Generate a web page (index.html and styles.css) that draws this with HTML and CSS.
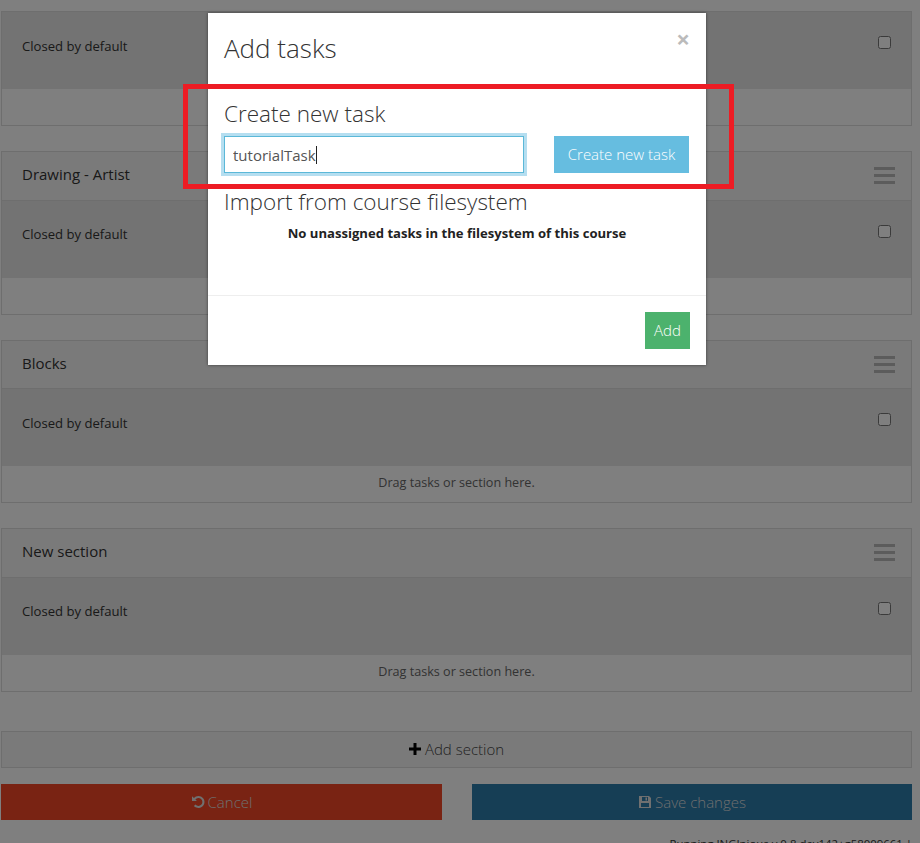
FILE: index.html
```html
<!DOCTYPE html>
<html lang="en">
<head>
    <meta charset="UTF-8">
    <title>Edit course structure</title>
    <link rel="stylesheet" href="styles.css">
</head>
<body>
    <div class="page">
        <div class="section first">
            <div class="section-body">
                <span>Closed by default</span>
                <input type="checkbox">
            </div>
            <div class="section-drop"></div>
        </div>

        <div class="section">
            <div class="section-head">
                <span>Drawing - Artist</span>
                <div class="bars"><i></i><i></i><i></i></div>
            </div>
            <div class="section-body">
                <span>Closed by default</span>
                <input type="checkbox">
            </div>
            <div class="section-drop"></div>
        </div>

        <div class="section">
            <div class="section-head">
                <span>Blocks</span>
                <div class="bars"><i></i><i></i><i></i></div>
            </div>
            <div class="section-body">
                <span>Closed by default</span>
                <input type="checkbox">
            </div>
            <div class="section-drop">Drag tasks or section here.</div>
        </div>

        <div class="section">
            <div class="section-head">
                <span>New section</span>
                <div class="bars"><i></i><i></i><i></i></div>
            </div>
            <div class="section-body">
                <span>Closed by default</span>
                <input type="checkbox">
            </div>
            <div class="section-drop">Drag tasks or section here.</div>
        </div>

        <div class="add-section">
            <svg class="icon-plus" viewBox="0 0 12 12"><path d="M4.500 0h3v4.500H12v3H7.500V12h-3V7.500H0v-3h4.500z"/></svg>
            Add section
        </div>

        <div class="actions">
            <div class="btn-big cancel">
                <svg class="icon" viewBox="0 0 14 14"><path d="M7.500 1a6 6 0 1 1-4.600 9.900l1.600-1.400A3.900 3.900 0 1 0 4.400 4.600L5.900 6H1V1.200l1.900 1.800A6 6 0 0 1 7.500 1z"/></svg>
                Cancel
            </div>
            <div class="btn-big save">
                <svg class="icon" viewBox="0 0 14 14"><path fill-rule="evenodd" d="M1 1h10l2 2v10H1zM4 2v4h6V2zM3 8v4h8V8zM7.500 2.500h1.500v3H7.500z"/></svg>
                Save changes
            </div>
        </div>

        <div class="version">Running INGInious v.0.8.dev142+g58009661 |</div>
    </div>

    <div class="overlay"></div>

    <div class="modal">
        <div class="modal-head">
            <h4>Add tasks</h4>
            <span class="close">&times;</span>
        </div>
        <div class="modal-body">
            <h3>Create new task</h3>
            <div class="new-task">
                <div class="task-field">
                    <input type="text" class="task-input" value="tutorialTask">
                    <span class="caret"></span>
                </div>
                <button class="btn-create">Create new task</button>
            </div>
            <h3>Import from course filesystem</h3>
            <p class="empty">No unassigned tasks in the filesystem of this course</p>
        </div>
        <div class="modal-foot">
            <button class="btn-add">Add</button>
        </div>
    </div>

    <div class="highlight"></div>
</body>
</html>
```

FILE: styles.css
```css
html, body {
    margin: 0;
    height: 843px;
    overflow: hidden;
}
body {
    font-family: "Open Sans", sans-serif;
    font-size: 13.100px;
    color: #333;
    background: #fff;
}
.page {
    padding: 11px 8px 0 1px;
}
.section {
    border: 1px solid #ddd;
    margin-bottom: 25px;
}
.section-head {
    height: 48.500px;
    padding: 0 16px 3px 20px;
    box-sizing: border-box;
    background: #f5f5f5;
    border-bottom: 1px solid #ddd;
    display: flex;
    align-items: center;
    justify-content: space-between;
    font-size: 15px;
}
.bars {
    display: flex;
    flex-direction: column;
    gap: 4px;
    width: 21px;
    margin-top: 3px;
}
.bars i {
    display: block;
    height: 3px;
    background: #b8b8b8;
}
.section-body {
    height: 77px;
    padding: 24.500px 20px 0;
    background: #e6e6e6;
    display: flex;
    align-items: flex-start;
    justify-content: space-between;
    box-sizing: border-box;
    line-height: 18px;
}
.section-body input {
    margin: -.5px 0 0;
    width: 13px;
    height: 13px;
}
.section-drop {
    height: 36px;
    line-height: 34px;
    text-align: center;
    font-size: 12.600px;
    color: #666;
}
.add-section {
    margin-top: 39px;
    height: 35px;
    border: 1px solid #ddd;
    background: #f5f5f5;
    display: flex;
    align-items: center;
    justify-content: center;
    gap: 4px;
    font-size: 15px;
    font-weight: 300;
    color: #444;
}
.icon-plus {
    width: 12px;
    height: 12px;
    fill: #000;
}
.actions {
    margin-top: 16px;
    display: grid;
    grid-template-columns: 441px 440px;
    justify-content: space-between;
}
.btn-big {
    height: 36px;
    display: flex;
    align-items: center;
    justify-content: center;
    gap: 3px;
    font-size: 15px;
    font-weight: 300;
    color: #ddd;
}
.btn-big .icon {
    width: 14px;
    height: 14px;
    fill: #e0e0e0;
}
.cancel {
    background: #f24726;
}
.save {
    background: #2c7cab;
}
.version {
    margin-top: 16px;
    text-align: right;
    font-size: 11.400px;
}
.overlay {
    position: absolute;
    inset: 0;
    background: rgba(0, 0, 0, .5);
}
.modal {
    position: absolute;
    left: 208px;
    top: 13px;
    width: 498px;
    height: 352px;
    background: #fff;
    display: flex;
    flex-direction: column;
    box-shadow: 0 0 3px rgba(0, 0, 0, .5);
}
.modal-head {
    height: 85px;
    flex: none;
    padding: 0 16px;
    display: flex;
    justify-content: space-between;
}
.modal-head h4 {
    margin: 17px 0 0;
    font-size: 26px;
    font-weight: 300;
    line-height: 36px;
}
.close {
    margin-top: 13px;
    font-size: 24px;
    font-weight: 700;
    line-height: 26px;
    color: #bbb;
}
.modal-body {
    padding: 0 16px;
    flex: 1;
}
.modal-body h3 {
    margin: 0;
    font-size: 22.500px;
    font-weight: 300;
    line-height: 32px;
}
.new-task {
    display: flex;
    justify-content: space-between;
    padding: 6px 1px 13px 0;
}
.task-field {
    position: relative;
}
.task-input {
    display: block;
    width: 300px;
    height: 37px;
    box-sizing: border-box;
    padding: 0 8px;
    border: 1px solid #5bb8d8;
    box-shadow: 0 0 0 3px #b5def0;
    outline: none;
    font: 15px "Open Sans", sans-serif;
    color: #555;
}
.caret {
    position: absolute;
    left: 92px;
    top: 10px;
    width: 1px;
    height: 18px;
    background: #222;
}
.btn-create {
    width: 135px;
    height: 37px;
    border: 0;
    padding: 0 0 2px;
    background: #66bde0;
    color: #fff;
    font: 300 15px "Open Sans", sans-serif;
}
.empty {
    margin: 6px 0 0;
    text-align: center;
    font-weight: 700;
    font-size: 13.100px;
    color: #222;
}
.modal-foot {
    height: 69px;
    flex: none;
    border-top: 1px solid #eee;
    padding: 0 16px;
    display: flex;
    justify-content: flex-end;
    align-items: center;
}
.btn-add {
    width: 45px;
    height: 37px;
    border: 0;
    padding: 0 0 2px;
    background: #4cb26d;
    color: #fff;
    font: 300 15px "Open Sans", sans-serif;
}
.highlight {
    position: absolute;
    left: 183px;
    top: 84px;
    width: 551px;
    height: 105px;
    box-sizing: border-box;
    border: 5px solid #ed1c24;
}
```
